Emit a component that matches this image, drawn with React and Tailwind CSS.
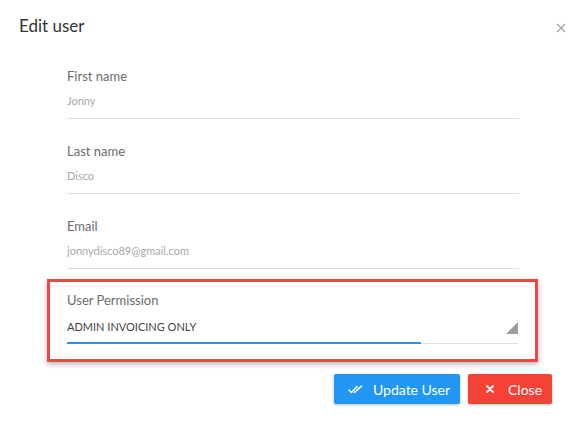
import React from "react";

const fields = [
  { label: "First name", value: "Jonny" },
  { label: "Last name", value: "Disco" },
  { label: "Email", value: "jonnydisco89@gmail.com" },
];

function Field({ label, value }) {
  return (
    <div>
      <div className="text-[13px] leading-[16px] text-[#6b6b6b]">{label}</div>
      <div className="mt-[10px] text-[11px] leading-[14px] text-[#a8a8a8]">{value}</div>
      <div className="mt-[10px] h-px bg-[#e0e0e0]" />
    </div>
  );
}

function DoubleCheck() {
  return (
    <svg width="15" height="10" viewBox="0 0 15 10" fill="none" stroke="white" strokeWidth="1.6" strokeLinecap="round" strokeLinejoin="round">
      <path d="M1 6 L3.5 8.5 L9 2.5" />
      <path d="M6.5 8.5 L13.5 2" />
    </svg>
  );
}

export default function App() {
  return (
    <div className="w-[588px] h-[422px] bg-white relative" style={{ fontFamily: "Lato, 'Noto Sans', sans-serif" }}>
      {/* Header */}
      <div className="flex items-center justify-between pt-[14px] pl-[19px] pr-[22px]">
        <h1 className="text-[17px] leading-[24px] text-[#333]">Edit user</h1>
        <svg width="10" height="10" viewBox="0 0 10 10" stroke="#9e9e9e" strokeWidth="1.1" className="mt-[4px]">
          <path d="M1 1 L9 9 M9 1 L1 9" />
        </svg>
      </div>

      {/* Form */}
      <div className="ml-[67px] w-[452px] mt-[30px] flex flex-col gap-[24px]">
        {fields.map((f) => (
          <Field key={f.label} {...f} />
        ))}
      </div>

      {/* Highlighted permission select */}
      <div className="ml-[47px] w-[491px] mt-[10px] border-[3px] border-[#f44545] shadow-[0_2px_5px_rgba(0,0,0,0.3)] px-[17px] pt-[10px] pb-[15px]">
        <div className="text-[13px] leading-[16px] text-[#6b6b6b]">User Permission</div>
        <div className="mt-[12px] flex items-center justify-between">
          <span className="text-[11px] leading-[14px] text-[#444]">ADMIN INVOICING ONLY</span>
          <svg width="12" height="12" viewBox="0 0 12 12" className="mt-[2px]">
            <path d="M12 0 L12 12 L0 12 Z" fill="#9e9e9e" />
          </svg>
        </div>
        <div className="mt-[8px] relative h-[2px]">
          <div className="absolute left-0 right-0 bottom-0 h-px bg-[#e0e0e0]" />
          <div className="absolute left-0 top-0 h-[2px] w-[354px] bg-[#2196f3]" />
        </div>
      </div>

      {/* Buttons */}
      <div className="mt-[12px] mr-[36px] flex justify-end gap-[8px]">
        <button className="h-[30px] w-[126px] rounded-[2px] bg-[#2196f3] text-white text-[14px] flex items-center pl-[14px] gap-[10px] shadow-[0_1px_3px_rgba(0,0,0,0.25)]">
          <DoubleCheck />
          <span>Update User</span>
        </button>
        <button className="h-[30px] w-[84px] rounded-[2px] bg-[#f44336] text-white text-[14px] flex items-center pl-[18px] gap-[14px] shadow-[0_1px_3px_rgba(0,0,0,0.25)]">
          <svg width="8" height="8" viewBox="0 0 8 8" stroke="white" strokeWidth="1.8" strokeLinecap="round">
            <path d="M1 1 L7 7 M7 1 L1 7" />
          </svg>
          <span>Close</span>
        </button>
      </div>
    </div>
  );
}
